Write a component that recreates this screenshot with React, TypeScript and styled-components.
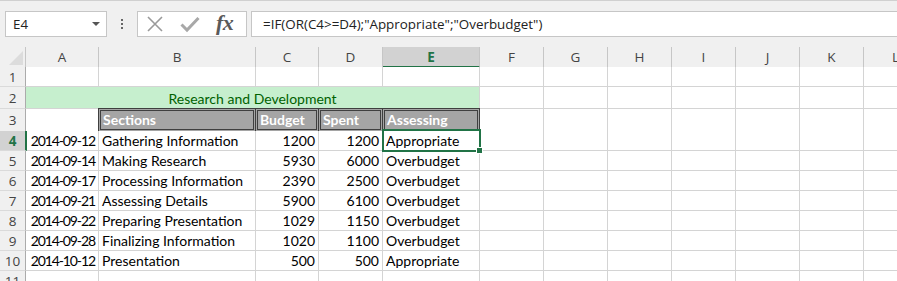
import React from "react";
import styled, { createGlobalStyle, css } from "styled-components";

const Global = createGlobalStyle`
  html, body { margin: 0; padding: 0; background: #ffffff; }
  body { width: 897px; height: 281px; overflow: hidden; }
`;

const UI_FONT = `"Open Sans", "Noto Sans", sans-serif`;
const CELL_FONT = `Lato, "Liberation Sans", sans-serif`;
const GREEN = "#217346";
const GRID = "#d4d4d4";
const HEAD_BG = "#f0f0f0";

const Page = styled.div`
  width: 897px;
  height: 281px;
  overflow: hidden;
  background: ${HEAD_BG};
  display: flex;
  flex-direction: column;
`;

const FormulaBar = styled.div`
  height: 37px;
  box-sizing: border-box;
  border-top: 1px solid #d0d0d0;
  padding-top: 10px;
  display: flex;
  align-items: flex-start;
  background: ${HEAD_BG};
`;

const NameBox = styled.div`
  margin-left: 5px;
  width: 102px;
  height: 26px;
  box-sizing: border-box;
  border: 1px solid #c6c6c6;
  background: #fff;
  display: flex;
  align-items: center;
  justify-content: space-between;
  padding: 0 6px 0 7px;
  font-family: ${UI_FONT};
  font-size: 13.3px;
  color: #222;
`;

const Caret = styled.span`
  width: 0;
  height: 0;
  border-left: 4px solid transparent;
  border-right: 4px solid transparent;
  border-top: 4px solid #555;
`;

const Dots = styled.div`
  width: 30px;
  height: 26px;
  display: flex;
  flex-direction: column;
  align-items: center;
  justify-content: center;
  gap: 2px;
  span {
    width: 2px;
    height: 2px;
    background: #666;
  }
`;

const IconBox = styled.div`
  width: 110px;
  height: 26px;
  box-sizing: border-box;
  border: 1px solid #c6c6c6;
  background: #fff;
  display: flex;
  align-items: center;
  padding-left: 8px;
  gap: 16px;
`;

const Fx = styled.span`
  font-family: "Liberation Serif", "DejaVu Serif", serif;
  font-style: italic;
  font-weight: bold;
  font-size: 22px;
  color: #5a5a5a;
  letter-spacing: -0.5px;
  line-height: 1;
  margin-top: -2px;
`;

const FormulaInput = styled.div`
  margin-left: 4px;
  flex: 1;
  height: 26px;
  box-sizing: border-box;
  border: 1px solid #c6c6c6;
  border-right: none;
  background: #fff;
  display: flex;
  align-items: center;
  padding-left: 11px;
  font-family: ${UI_FONT};
  font-size: 13.4px;
  color: #222;
  white-space: nowrap;
`;

const Spacer = styled.div`
  height: 10px;
  flex: none;
`;

const TEMPLATE = "26px 73px 157px 63px 64px 97px 64px 64px 64px 64px 64px 64px 64px";

const Row = styled.div<{ $h: number }>`
  display: grid;
  grid-template-columns: ${TEMPLATE};
  height: ${(p) => p.$h}px;
  flex: none;
`;

const Corner = styled.div`
  background: ${HEAD_BG};
  border-right: 1px solid #c6c6c6;
  border-bottom: 1px solid #ababab;
  display: flex;
  align-items: flex-end;
  justify-content: flex-end;
  padding: 0 2px 2px 0;
`;

const ColHead = styled.div<{ $active?: boolean }>`
  background: ${(p) => (p.$active ? "#d2d2d2" : HEAD_BG)};
  border-right: 1px solid #c6c6c6;
  border-bottom: ${(p) => (p.$active ? `2px solid ${GREEN}` : "1px solid #ababab")};
  display: flex;
  align-items: center;
  justify-content: center;
  font-family: ${UI_FONT};
  font-size: 13.5px;
  color: ${(p) => (p.$active ? GREEN : "#444")};
  font-weight: ${(p) => (p.$active ? 700 : 400)};
  ${(p) => p.$active && css`padding-top: 1px;`}
`;

const RowHead = styled.div<{ $active?: boolean }>`
  background: ${(p) => (p.$active ? "#d2d2d2" : HEAD_BG)};
  border-right: ${(p) => (p.$active ? `2px solid ${GREEN}` : "1px solid #ababab")};
  border-bottom: 1px solid #dadada;
  margin-right: ${(p) => (p.$active ? "-1px" : "0")};
  display: flex;
  align-items: center;
  justify-content: center;
  font-family: ${UI_FONT};
  font-size: 13.5px;
  color: ${(p) => (p.$active ? GREEN : "#444")};
  font-weight: ${(p) => (p.$active ? 700 : 400)};
  position: relative;
  z-index: 1;
`;

const Cell = styled.div<{ $align?: "left" | "right" | "center"; $tight?: boolean }>`
  background: #fff;
  border-right: 1px solid ${GRID};
  border-bottom: 1px solid ${GRID};
  display: flex;
  align-items: flex-end;
  justify-content: ${(p) =>
    p.$align === "right" ? "flex-end" : p.$align === "center" ? "center" : "flex-start"};
  padding: 0 3px 0 3px;
  font-family: ${CELL_FONT};
  font-size: 14px;
  line-height: 18px;
  letter-spacing: ${(p) => (p.$tight ? "-1.1px" : "0")};
  color: #000;
  white-space: nowrap;
  overflow: visible;
  min-width: 0;
  position: relative;
`;

const TitleCell = styled(Cell)`
  grid-column: span 5;
  background: #c6efce;
  color: #006100;
  justify-content: center;
`;

const HeaderCell = styled(Cell)`
  background: #a5a5a5;
  border: 3px double #3f3f3f;
  margin-left: -1px;
  margin-top: -1px;
  color: #fff;
  font-weight: 700;
  padding: 0 2px 0 2px;
  align-items: center;
`;

const SelectedCell = styled(Cell)`
  &::after {
    content: "";
    position: absolute;
    left: -1px;
    right: -2px;
    top: -2px;
    bottom: -2px;
    border: 2px solid ${GREEN};
    pointer-events: none;
    z-index: 2;
  }
  &::before {
    content: "";
    position: absolute;
    right: -4px;
    bottom: -4px;
    width: 5px;
    height: 5px;
    background: ${GREEN};
    border: 1px solid #fff;
    z-index: 3;
  }
`;

const extraCols = ["F", "G", "H", "I", "J", "K", "L"];
const allCols = ["A", "B", "C", "D", "E", ...extraCols];

const data: [string, string, number, number, string][] = [
  ["2014-09-12", "Gathering Information", 1200, 1200, "Appropriate"],
  ["2014-09-14", "Making Research", 5930, 6000, "Overbudget"],
  ["2014-09-17", "Processing Information", 2390, 2500, "Overbudget"],
  ["2014-09-21", "Assessing Details", 5900, 6100, "Overbudget"],
  ["2014-09-22", "Preparing Presentation", 1029, 1150, "Overbudget"],
  ["2014-09-28", "Finalizing Information", 1020, 1100, "Overbudget"],
  ["2014-10-12", "Presentation", 500, 500, "Appropriate"],
];

const EmptyCells = ({ cols }: { cols: string[] }) => (
  <>
    {cols.map((c) => (
      <Cell key={c} />
    ))}
  </>
);

const CancelIcon = () => (
  <svg width="18" height="18" viewBox="0 0 18 18">
    <path d="M2 2 L16 16 M16 2 L2 16" stroke="#9a9a9a" strokeWidth="1.6" fill="none" />
  </svg>
);

const CheckIcon = () => (
  <svg width="20" height="18" viewBox="0 0 20 18">
    <path d="M1.5 9.5 L7 15 L18.5 3" stroke="#a8a8a8" strokeWidth="3" fill="none" />
  </svg>
);

export default function App() {
  return (
    <>
      <Global />
      <Page>
        <FormulaBar>
          <NameBox>
            <span>E4</span>
            <Caret />
          </NameBox>
          <Dots>
            <span />
            <span />
            <span />
          </Dots>
          <IconBox>
            <CancelIcon />
            <CheckIcon />
            <Fx>fx</Fx>
          </IconBox>
          <FormulaInput>=IF(OR(C4&gt;=D4);"Appropriate";"Overbudget")</FormulaInput>
        </FormulaBar>
        <Spacer />
        <Row $h={20}>
          <Corner>
            <svg width="14" height="14" viewBox="0 0 14 14">
              <polygon points="14,0 14,14 0,14" fill="#dcdcdc" />
            </svg>
          </Corner>
          {allCols.map((c) => (
            <ColHead key={c} $active={c === "E"}>
              {c}
            </ColHead>
          ))}
        </Row>
        <Row $h={20}>
          <RowHead>1</RowHead>
          <EmptyCells cols={allCols} />
        </Row>
        <Row $h={22}>
          <RowHead>2</RowHead>
          <TitleCell>Research and Development</TitleCell>
          <EmptyCells cols={extraCols} />
        </Row>
        <Row $h={22}>
          <RowHead>3</RowHead>
          <Cell />
          <HeaderCell>Sections</HeaderCell>
          <HeaderCell>Budget</HeaderCell>
          <HeaderCell>Spent</HeaderCell>
          <HeaderCell>Assessing</HeaderCell>
          <EmptyCells cols={extraCols} />
        </Row>
        {data.map((r, i) => {
          const n = i + 4;
          return (
            <Row $h={20} key={n}>
              <RowHead $active={n === 4}>{n}</RowHead>
              <Cell $align="right" $tight>
                {r[0]}
              </Cell>
              <Cell>{r[1]}</Cell>
              <Cell $align="right">{r[2]}</Cell>
              <Cell $align="right">{r[3]}</Cell>
              {n === 4 ? <SelectedCell>{r[4]}</SelectedCell> : <Cell>{r[4]}</Cell>}
              <EmptyCells cols={extraCols} />
            </Row>
          );
        })}
        <Row $h={20}>
          <RowHead>11</RowHead>
          <EmptyCells cols={allCols} />
        </Row>
      </Page>
    </>
  );
}
